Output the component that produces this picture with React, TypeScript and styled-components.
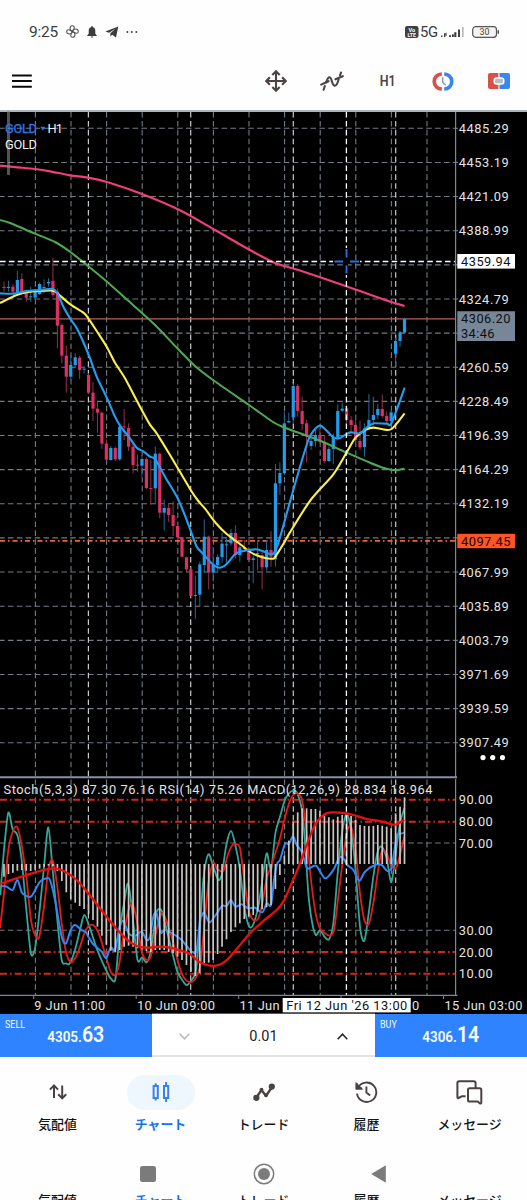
import React from 'react';
import styled, { createGlobalStyle } from 'styled-components';

const GlobalStyle = createGlobalStyle`
  * { box-sizing: border-box; }
  body { margin: 0; background: #fefefe; font-family: Roboto, "Noto Sans CJK JP", sans-serif; }
`;

const Screen = styled.main`
  width: 527px;
  height: 1200px;
  overflow: hidden;
  display: flex;
  flex-direction: column;
  background: #fefefe;
`;

const StatusBar = styled.header`
  height: 52px;
  padding: 11px 28px 0 29px;
  display: flex;
  align-items: center;
  color: #3c3c3c;
  flex: none;
`;

const StatusText = styled.span<{ $size: number }>`
  font-size: ${(p) => p.$size}px;
  line-height: 20px;
  letter-spacing: -0.2px;
`;

const StatusIcon = styled.svg<{ $gap: number }>`
  margin-left: ${(p) => p.$gap}px;
  flex: none;
  overflow: visible;
`;

const Spacer = styled.div`
  flex: 1;
`;

const Toolbar = styled.div`
  height: 58px;
  padding: 0 14px 0 12px;
  display: flex;
  align-items: center;
  flex: none;
`;

const ToolButton = styled.button`
  width: 55.6px;
  height: 40px;
  padding: 0;
  border: 0;
  background: none;
  display: flex;
  align-items: center;
  justify-content: center;
  color: #4c4444;
`;

const ToolGroup = styled.div`
  display: flex;
  margin-right: -13.4px;
`;

const Timeframe = styled.span`
  font-family: Roboto, sans-serif;
  font-size: 15px;
  font-weight: 600;
  transform: scaleX(0.83);
`;

const ChartSvg = styled.svg`
  display: block;
  flex: none;
  background: #000;
  font-family: Roboto, sans-serif;
`;

const TradeBar = styled.section`
  height: 43px;
  display: grid;
  grid-template-columns: 152px 1fr 152px;
  flex: none;
`;

const PriceButton = styled.button`
  position: relative;
  border: 0;
  padding: 0 0 1px;
  background: #3083fe;
  color: #f6faff;
  display: flex;
  justify-content: center;
  align-items: center;
  font-family: Roboto, sans-serif;
`;

const Side = styled.span`
  position: absolute;
  left: 4.5px;
  top: 3px;
  font-size: 11.5px;
  line-height: 14px;
  transform: scaleX(0.78);
  transform-origin: left;
`;

const Quote = styled.span`
  font-size: 15.5px;
  font-weight: 600;
  line-height: 28px;
  transform: scaleX(0.87);
  b { font-size: 22.5px; font-weight: 600; }
`;

const VolumeBox = styled.div`
  display: flex;
  align-items: center;
  justify-content: space-between;
  padding: 4px 27px 0;
  border-bottom: 2px solid #e4e4e4;
  background: #fff;
  color: #222;
  font-size: 14.5px;
`;

const NavBar = styled.nav`
  height: 76.7px;
  padding: 18px 6px 0;
  display: grid;
  grid-template-columns: repeat(5, 103px);
  flex: none;
`;

const NavItem = styled.div`
  display: flex;
  flex-direction: column;
  align-items: center;
`;

const Pill = styled.div<{ $active?: boolean }>`
  width: 68px;
  height: 34.5px;
  border-radius: 17.5px;
  display: flex;
  align-items: center;
  justify-content: center;
  background: ${(p) => (p.$active ? '#eef6fe' : 'transparent')};
  color: ${(p) => (p.$active ? '#3a80ec' : '#4a4242')};
`;

const NavLabel = styled.span<{ $active?: boolean }>`
  font-family: "Noto Sans CJK JP", sans-serif;
  font-size: 12.9px;
  line-height: 18px;
  white-space: nowrap;
  font-weight: ${(p) => (p.$active ? 700 : 500)};
  color: ${(p) => (p.$active ? '#1673ea' : '#151515')};
`;

const NavItemLabel = styled(NavLabel)`
  margin-top: 5px;
`;

const SystemBar = styled.div`
  height: 57.3px;
  padding-top: 24px;
  display: grid;
  grid-template-columns: repeat(3, 115.2px);
  justify-content: center;
  justify-items: center;
  align-items: center;
  flex: none;
`;

const LabelStrip = styled.div`
  display: grid;
  grid-template-columns: repeat(5, 103px);
  padding: 0 6px;
  justify-items: center;
`;

type Pt = [number, number];

const candleX = (i: number) => 4 + 4.45 * i;

/* [up, bodyTop, bodyBottom, wickTop, wickBottom], in thirds of a pixel from the block's base */
type Candle = [number, number, number, number, number];
const candleBlocks: { base: number; rows: Candle[] }[] = [
  {
    base: 260,
    rows: [
      [0, 81, 84, 65, 95], [1, 81, 84, 62, 95], [0, 80, 95, 72, 98], [1, 60, 97, 33, 100], [0, 57, 95, 40, 97],
      [0, 92, 113, 88, 125], [1, 109, 112, 80, 125], [1, 95, 113, 88, 120], [1, 72, 102, 68, 105], [1, 81, 84, 58, 100],
      [1, 66, 70, 55, 80], [0, 63, 105, -7, 110], [0, 95, 197, 85, 265], [0, 195, 287, 190, 310], [0, 287, 350, 257, 398],
      [1, 315, 350, 285, 362], [1, 292, 315, 280, 325], [0, 293, 330, 288, 357], [1, 326, 329, 318, 340], [0, 345, 398, 340, 400],
      [0, 398, 446, 366, 483], [0, 446, 458, 425, 518], [0, 458, 551, 455, 567], [0, 551, 599, 538, 602], [1, 564, 600, 558, 602],
      [0, 564, 598, 560, 603], [1, 500, 598, 495, 602], [0, 499, 502, 447, 540], [0, 504, 560, 490, 573], [0, 560, 615, 545, 640],
      [0, 614, 617, 583, 635],
    ],
  },
  {
    base: 380,
    rows: [
      [1, 237, 257, 225, 290], [0, 237, 324, 232, 328], [0, 324, 327, 240, 375], [1, 221, 325, 200, 368], [0, 221, 398, 218, 415],
      [1, 384, 398, 358, 452], [0, 384, 405, 370, 425], [0, 405, 438, 365, 468], [0, 438, 472, 425, 475], [0, 472, 530, 470, 532],
      [0, 532, 568, 530, 577], [0, 568, 648, 562, 650], [1, 645, 648, 587, 718], [1, 553, 644, 545, 678], [1, 470, 555, 418, 578],
      [0, 470, 577, 467, 628], [1, 555, 578, 500, 605], [1, 531, 555, 523, 575], [1, 491, 531, 458, 548], [1, 493, 496, 475, 550],
      [1, 459, 490, 447, 497], [0, 459, 525, 436, 535], [1, 502, 525, 493, 545], [0, 504, 507, 480, 515], [0, 512, 540, 500, 543],
      [1, 535, 540, 520, 610], [1, 519, 522, 480, 570], [0, 525, 562, 515, 628], [1, 510, 562, 480, 572], [0, 510, 530, 453, 560],
      [1, 310, 538, 252, 560], [1, 279, 310, 247, 345],
    ],
  },
  {
    base: 300,
    rows: [
      [1, 370, 520, 335, 525], [1, 363, 367, 338, 370], [1, 258, 352, 250, 370], [0, 258, 333, 252, 350], [0, 333, 372, 290, 390],
      [0, 370, 410, 360, 487], [1, 423, 438, 400, 450], [1, 405, 423, 390, 440], [0, 405, 425, 385, 430], [0, 425, 483, 405, 490],
      [1, 447, 483, 440, 485], [1, 410, 447, 400, 492], [1, 333, 412, 313, 420], [1, 326, 332, 308, 337], [0, 325, 360, 322, 370],
      [0, 360, 375, 348, 400], [0, 375, 420, 358, 428], [0, 423, 442, 362, 450], [1, 385, 441, 370, 470], [1, 360, 385, 282, 390],
      [1, 345, 360, 290, 375], [1, 327, 345, 312, 358], [0, 327, 348, 284, 355], [0, 348, 363, 335, 370], [1, 337, 363, 330, 372],
      [1, 123, 161, 113, 200], [1, 97, 123, 93, 140], [1, 57, 98, 53, 100],
    ],
  },
];

const candles = candleBlocks.flatMap(({ base, rows }) =>
  rows.map(([up, a, b, c, d]) => ({ up: up === 1, a: base + a / 3, b: base + b / 3, c: base + c / 3, d: base + d / 3 })),
);

const shift = (ox: number, oy: number, pts: Pt[]): Pt[] => pts.map(([x, y]) => [ox + x / 3, oy + y / 3]);

const slowAverage: Pt[] = [
  [0, 165.6], [18, 167.3], [35, 169], [50, 171.3], [70, 175.3], [88, 177.7], [107, 182], [142, 194], [180, 210.3],
  [215, 230], [250, 250], [275, 263], [300, 270.5], [347, 286.5], [383, 299.3], [404.5, 306],
];
const midAverage: Pt[] = [
  [0, 220], [10, 223], [35, 233.7], [55, 242], [70, 251.7], [88, 266], [107, 281.7], [133, 305], [155, 325], [178, 349],
  [195, 366], [213, 380], [249, 405], [273, 422], [285, 427.7], [320, 440.7], [346.7, 452.7], [370, 462.7], [385, 468.3],
  [395, 470.3], [404.5, 468.7],
];
const yellowAverage: Pt[] = [
  ...shift(0, 260, [[0, 129], [50, 105], [80, 97], [120, 93], [158, 92], [172, 100], [212, 134], [250, 158], [265, 175], [290, 213], [320, 260], [345, 308], [375, 355]]),
  ...shift(140, 380, [[0, 80], [30, 134], [48, 157], [90, 225], [152, 330], [175, 363], [195, 386], [230, 432], [260, 462], [300, 492], [326, 513], [350, 526], [375, 534], [395, 536], [405, 532], [433, 487], [450, 457]]),
  ...shift(270, 300, [[122, 600], [190, 523], [230, 457], [255, 415], [285, 390], [310, 383], [335, 387], [365, 387], [404, 340]]),
];
const blueAverage: Pt[] = [
  ...shift(0, 260, [[0, 100], [40, 101], [80, 93], [120, 90], [158, 87], [172, 100], [190, 140], [212, 178], [232, 208], [265, 282], [290, 350], [320, 412], [345, 470], [362, 500], [386, 530], [410, 563]]),
  ...shift(140, 380, [[10, 214], [30, 230], [46, 238], [75, 290], [113, 355], [140, 420], [153, 455], [170, 500], [190, 522], [215, 550], [232, 562], [245, 562], [260, 552], [285, 523], [300, 515], [345, 508], [365, 512], [395, 523], [408, 508], [425, 455], [450, 365]]),
  ...shift(270, 300, [[90, 500], [115, 420], [130, 393], [150, 377], [170, 392], [190, 412], [210, 414], [230, 402], [243, 397], [270, 400], [290, 383], [312, 370], [350, 371], [365, 368], [404, 263]]),
];

const stochMain: Pt[] = [
  ...shift(0, 770, [[1, 375], [12, 240], [25, 128], [38, 178], [52, 195], [65, 270], [80, 430], [93, 552], [106, 530], [119, 420], [132, 290], [145, 172], [158, 300], [172, 450], [185, 570], [198, 580], [210, 580], [225, 540], [240, 480], [253, 435], [270, 475], [290, 535], [318, 600], [332, 625], [345, 632], [352, 570], [359, 480], [372, 400], [384, 340], [395, 410], [412, 567], [426, 562], [440, 577], [452, 545], [460, 490], [470, 425], [485, 422], [500, 480], [520, 560], [532, 605], [548, 632], [560, 645], [575, 630], [588, 600]]),
  ...shift(200, 770, [[0, 470], [10, 330], [25, 253], [40, 290], [55, 330], [66, 310], [79, 225], [93, 183], [106, 225], [120, 300], [133, 410], [146, 467], [158, 467], [175, 410], [187, 330], [200, 250], [213, 300], [226, 190], [240, 140], [253, 95], [265, 72], [280, 62], [292, 70], [306, 120], [316, 230], [325, 370], [335, 450], [347, 495], [360, 480], [372, 498], [387, 508], [400, 460], [413, 310], [426, 190], [440, 130], [453, 180], [465, 280], [480, 470], [493, 512], [506, 430], [520, 320], [533, 245], [545, 230], [560, 265], [574, 337], [587, 250], [600, 160], [613, 115]]),
];
const stochSignal: Pt[] = [
  ...shift(0, 770, [[0, 475], [12, 370], [25, 240], [40, 180], [52, 172], [65, 225], [80, 330], [93, 450], [106, 497], [118, 500], [132, 410], [145, 300], [158, 270], [172, 350], [185, 460], [198, 545], [213, 577], [228, 560], [240, 530], [255, 485], [270, 465], [285, 470], [300, 500], [318, 560], [332, 605], [345, 615], [358, 580], [370, 500], [384, 425], [397, 400], [412, 460], [425, 545], [440, 570], [452, 560], [465, 500], [480, 440], [490, 430], [505, 470], [520, 520], [535, 580], [550, 620], [570, 637], [585, 628]]),
  ...shift(200, 770, [[0, 590], [10, 500], [25, 340], [40, 280], [52, 298], [70, 303], [82, 260], [95, 228], [108, 222], [120, 235], [133, 330], [146, 420], [160, 450], [175, 445], [187, 400], [200, 325], [213, 290], [226, 250], [240, 205], [253, 150], [267, 100], [280, 75], [292, 70], [306, 90], [320, 190], [333, 330], [347, 430], [360, 475], [375, 490], [390, 497], [402, 480], [415, 380], [426, 290], [440, 190], [453, 170], [468, 250], [480, 370], [493, 450], [506, 462], [520, 400], [533, 310], [545, 245], [560, 250], [575, 290], [590, 290], [613, 200]]),
];
const rsi: Pt[] = [
  ...shift(0, 770, [[3, 348], [20, 350], [38, 360], [52, 330], [66, 368], [80, 378], [95, 378], [120, 335], [140, 325], [150, 330], [165, 390], [185, 500], [198, 520], [212, 480], [225, 465], [245, 480], [258, 487], [265, 500], [279, 522], [305, 545], [318, 565], [332, 533], [345, 540], [359, 470], [370, 453], [386, 490], [405, 498], [425, 485], [440, 510], [450, 500], [460, 440], [470, 430], [482, 487], [495, 480], [520, 492], [545, 510], [575, 545], [590, 540]]),
  ...shift(200, 770, [[0, 450], [5, 438], [13, 428], [28, 457], [45, 438], [66, 408], [80, 408], [93, 390], [106, 410], [125, 403], [145, 415], [165, 413], [187, 427], [200, 400], [213, 405], [222, 330], [232, 280], [240, 270], [255, 222], [267, 222], [279, 198], [290, 225], [305, 245], [322, 295], [348, 287], [375, 325], [400, 300], [418, 263], [430, 265], [442, 285], [460, 300], [478, 332], [495, 305], [525, 285], [545, 285], [562, 303], [575, 290], [590, 200], [600, 192], [613, 188]]),
];
const macdSignal: Pt[] = [
  ...shift(0, 770, [[0, 342], [40, 328], [80, 315], [120, 303], [158, 295], [190, 302], [230, 330], [265, 370], [300, 415], [340, 465], [380, 508], [410, 528], [440, 533], [480, 530], [510, 533], [540, 541], [570, 552]]),
  ...shift(200, 770, [[0, 577], [40, 588], [75, 575], [110, 537], [150, 490], [190, 453], [230, 420], [250, 395], [275, 340], [300, 280], [320, 225], [345, 165], [375, 132], [400, 127], [430, 129], [460, 135], [500, 147], [540, 153], [575, 163], [590, 163], [613, 150]]),
];

/* MACD histogram ends, in thirds of a pixel below y = 770; the zero line is 282 */
const histogram = [
  320, 312, 308, 302, 300, 302, 303, 300, 296, 290, 287, 288, 303, 333, 367, 388, 398, 408, 417, 432, 450, 470, 497, 524, 542,
  547, 540, 530, 527, 530, 535, 538, 543, 546, 540, 540, 540, 546, 550, 560, 570, 585, 605, 618, 610, 580, 578, 570, 552, 530,
  508, 486, 472, 460, 447, 440, 435, 425, 418, 412, 405, 357, 315, 257, 212, 155, 127, 115, 115, 117, 117, 122, 133, 142, 148,
  140, 135, 135, 138, 150, 165, 168, 168, 168, 165, 167, 170, 175, 130, 110, 82,
];

/* Catmull-Rom spline through the points */
const smooth = (p: Pt[]) => {
  let d = `M${p[0][0]} ${p[0][1]}`;
  for (let i = 0; i < p.length - 1; i++) {
    const a = p[Math.max(0, i - 1)];
    const b = p[i];
    const c = p[i + 1];
    const e = p[Math.min(p.length - 1, i + 2)];
    const k = 7;
    d += `C${(b[0] + (c[0] - a[0]) / k).toFixed(2)} ${(b[1] + (c[1] - a[1]) / k).toFixed(2)} ${(c[0] - (e[0] - b[0]) / k).toFixed(2)} ${(c[1] - (e[1] - b[1]) / k).toFixed(2)} ${c[0].toFixed(2)} ${c[1].toFixed(2)}`;
  }
  return d;
};

const gridX = Array.from({ length: 12 }, (_, i) => 35.4 + i * 35.6);
const dayX = [88.4, 190.7, 293.3, 395.7];
const prices = Array.from({ length: 19 }, (_, i) => ({ y: 128.3 + i * 34.135, text: (4485.29 - i * 32.1).toFixed(2) }));
/* rows whose label gives way to a price tag */
const taggedRows = [4, 6, 12];
const levels = [
  { y: 799.7, text: '90.00', hot: true },
  { y: 821.7, text: '80.00', hot: true },
  { y: 843, text: '70.00', hot: false },
  { y: 930.3, text: '30.00', hot: false },
  { y: 952, text: '20.00', hot: true },
  { y: 973.8, text: '10.00', hot: true },
];
const times: [number, number, string][] = [
  [34.3, 71, '9 Jun 11:00'],
  [137, 78, '10 Jun 09:00'],
  [239.5, 40, '11 Jun'],
  [412, 8, '0'],
  [444.5, 78, '15 Jun 03:00'],
];

const PriceTag = ({ y, h, fill, color, children }: { y: number; h: number; fill: string; color: string; children: string }) => (
  <g>
    <rect x={457.3} y={y} width={57.7} height={h} fill={fill} />
    <text x={461} y={y + 11.8} fill={color} textLength={49.5}>{children}</text>
  </g>
);

const Chart = () => (
  <ChartSvg width={527} height={904} viewBox="0 110 527 904" fontSize={12.8}>
    <g stroke="#737b84" strokeWidth={1.1} strokeDasharray="5.6 3.3">
      {gridX.map((x) => <line key={x} x1={x} x2={x} y1={112} y2={995} />)}
      {prices.map((p) => <line key={p.y} x1={-1} x2={455} y1={p.y} y2={p.y} />)}
      {levels.filter((l) => !l.hot).map((l) => <line key={l.y} x1={-1} x2={455} y1={l.y} y2={l.y} />)}
    </g>
    <g stroke="#c9c9c9" strokeWidth={1.2} strokeDasharray="5.6 3.3">
      {dayX.map((x) => <line key={x} x1={x} x2={x} y1={112} y2={995} />)}
    </g>
    <g stroke="#d0291c" strokeWidth={2} strokeDasharray="7 3 1.6 3">
      {levels.filter((l) => l.hot).map((l) => <line key={l.y} x1={0} x2={455} y1={l.y} y2={l.y} />)}
    </g>
    <line x1={0} x2={455} y1={318.8} y2={318.8} stroke="#b5605f" strokeWidth={1.3} />
    <line x1={0} x2={455} y1={540.8} y2={540.8} stroke="#f4602d" strokeWidth={1.8} strokeDasharray="5 3 1.5 3" />

    {candles.map((c, i) => (
      <g key={i}>
        <line x1={candleX(i)} x2={candleX(i)} y1={c.c} y2={c.d} stroke={c.up ? '#28649b' : '#96304c'} strokeWidth={1} />
        <rect x={candleX(i) - 1.6} y={c.a} width={3.2} height={c.b - c.a} fill={c.up ? '#229be9' : '#dc2f63'} />
      </g>
    ))}

    <g fill="none" strokeLinejoin="round">
      <path d={smooth(slowAverage)} stroke="#ee3f7d" strokeWidth={2.2} />
      <path d={smooth(midAverage)} stroke="#4fa954" strokeWidth={2} />
      <path d={smooth(yellowAverage)} stroke="#fbee4f" strokeWidth={2.1} />
      <path d={smooth(blueAverage)} stroke="#229ef0" strokeWidth={2.1} />
      <path d={smooth(stochMain)} stroke="#35a596" strokeWidth={1.8} />
      <path d={smooth(stochSignal)} stroke="#e61b19" strokeWidth={1.8} />
      <path d={smooth(rsi)} stroke="#3187f3" strokeWidth={2} />
    </g>
    {histogram.map((v, i) => (
      <line key={i} x1={candleX(i)} x2={candleX(i)} y1={864} y2={770 + v / 3} stroke="#cbc8c4" strokeWidth={1.7} />
    ))}
    <path d={smooth(macdSignal)} fill="none" stroke="#ea0f0f" strokeWidth={2.3} />

    <g stroke="#fff" strokeWidth={1.3} strokeDasharray="5.6 3.3">
      <line x1={0} x2={455} y1={261.5} y2={261.5} />
      <line x1={346.4} x2={346.4} y1={112} y2={995} />
    </g>
    <rect x={333} y={260} width={27} height={3} />
    <rect x={345} y={248} width={3} height={27} />
    <path d="M334.5 261.5h8.5M350 261.5h9M346.5 249v8.5M346.5 265.5v8" stroke="#2a70e4" strokeWidth={1.8} />

    <path d="M0 111H527" stroke="#aab6ba" strokeWidth={2} />
    <path d="M455.6 112V777M455.6 779V995.3M0 995.3H457.5" stroke="#7c8797" strokeWidth={1.2} fill="none" />
    <path d="M0 777.3H457" stroke="#8791a3" strokeWidth={2} />
    <path d="M33.7 995v4M136.2 995v4M238.7 995v4M341 995v4M443.5 995v4" stroke="#7c8797" strokeWidth={1} />
    <rect x={7} y={111} width={3} height={64} fill="#8a8a8a" opacity={0.6} />

    <g fill="#e4e4e4">
      {prices.map((p, i) => (
        <g key={p.y}>
          <line x1={455} x2={458} y1={p.y} y2={p.y} stroke="#7c8797" />
          {!taggedRows.includes(i) && <text x={458.8} y={p.y + 4.6} textLength={50}>{p.text}</text>}
        </g>
      ))}
      {levels.map((l) => <text key={l.y} x={458.8} y={l.y + 4.6} textLength={34}>{l.text}</text>)}
      {times.map(([x, w, t]) => <text key={t} x={x} y={1009.6} textLength={w}>{t}</text>)}
      <text x={3.5} y={794.2} textLength={429}>Stoch(5,3,3) 87.30 76.16 RSI(14) 75.26 MACD(12,26,9) 28.834 18.964</text>
      <text x={5} y={148.8} textLength={32} fill="#f2f2f2">GOLD</text>
      <text x={47.5} y={132.7} textLength={15.5} fill="#f2f2f2">H1</text>
      <text x={5} y={132.7} textLength={32} fill="#2a78f0" stroke="#2a78f0" strokeWidth={0.3}>GOLD</text>
      <path d="M40.3 126.8h5l-2.5 3.6z" fill="#2a78f0" />
    </g>

    <PriceTag y={254} h={14.6} fill="#fff" color="#111">4359.94</PriceTag>
    <rect x={457.3} y={326} width={57.7} height={15} fill="#788797" />
    <PriceTag y={311.6} h={15.4} fill="#788797" color="#0c0f12">4306.20</PriceTag>
    <line x1={457.3} x2={515} y1={311.6} y2={311.6} stroke="#98505a" />
    <text x={461} y={338.2} fill="#0c0f12" textLength={33.5}>34:46</text>
    <PriceTag y={533.8} h={14.4} fill="#fb5426" color="#180500">4097.45</PriceTag>
    <rect x={282.7} y={998} width={128} height={14.4} fill="#fff" />
    <text x={286.3} y={1009.6} fill="#111" textLength={121}>Fri 12 Jun '26 13:00</text>

    <g fill="#fff">
      <circle cx={483} cy={757.6} r={2.6} />
      <circle cx={492.7} cy={757.6} r={2.6} />
      <circle cx={502.5} cy={757.6} r={2.6} />
    </g>
    <path d="M152 1013.5H375" stroke="#555" strokeWidth={1} />
  </ChartSvg>
);

const navItems = [
  {
    label: '気配値',
    icon: (
      <svg width="20" height="18" viewBox="0 0 20 18" fill="none" stroke="currentColor" strokeWidth="2">
        <path d="M6 15V2.6M2 6.6 6 2.4l4 4.2M14.2 2.5v12.8M10.2 11.2l4 4.2 4-4.2" />
      </svg>
    ),
  },
  {
    label: 'チャート',
    active: true,
    icon: (
      <svg width="20" height="22" viewBox="0 0 20 22" fill="none" stroke="currentColor" strokeWidth="2">
        <path d="M2.6 5h4.2v12H2.6zM4.7 2.2V5M4.7 17v2.4M13 5h4.2v12H13zM15.1 1v4M15.1 17v4" />
      </svg>
    ),
  },
  {
    label: 'トレード',
    icon: (
      <svg width="22" height="20" viewBox="0 0 22 20" fill="none" stroke="currentColor" strokeWidth="2.3" strokeLinejoin="round">
        <path d="M3.4 15.5 8.5 8l4.5 6 6-9" />
        <g fill="currentColor" stroke="none">
          <circle cx="3.4" cy="15.8" r="3.1" />
          <circle cx="18.8" cy="4.6" r="3.1" />
          <circle cx="8.5" cy="7.6" r="1.9" />
          <circle cx="13" cy="13.2" r="1.9" />
        </g>
      </svg>
    ),
  },
  {
    label: '履歴',
    icon: (
      <svg width="23" height="22" viewBox="0 0 23 22" fill="none" stroke="currentColor" strokeWidth="1.9">
        <path d="M3.2 6.4A9.7 9.7 0 1 1 2 12.6M1.6 2.2v5.3h5.2M11.4 5.6v6l3.8 3" />
        <path d="M1.6 3v4.5h4.5z" fill="currentColor" />
      </svg>
    ),
  },
  {
    label: 'メッセージ',
    icon: (
      <svg width="27" height="25" viewBox="0 0 27 25" fill="none" stroke="currentColor" strokeWidth="2" strokeLinejoin="round">
        <path d="M9.6 16.2H6.2L2.6 18c-1 .4-1.2-.2-1.2-1V3c0-1.2.7-1.8 1.8-1.8h14.6c1.1 0 1.8.7 1.8 1.8v5" />
        <path d="M13.8 8.2h9.8c1 0 1.7.7 1.7 1.7v12.5c0 1-.6 1.5-1.4 1l-2.1-1.8h-8c-1.1 0-1.8-.7-1.8-1.7V10c0-1.1.7-1.8 1.8-1.8z" />
      </svg>
    ),
  },
];

const App = () => (
  <Screen>
    <GlobalStyle />
    <StatusBar>
      <StatusText $size={15.5}>9:25</StatusText>
      <StatusIcon $gap={8} width="13" height="13" viewBox="0 0 13 13" fill="none" stroke="#555" strokeWidth="1.1">
        {[0, 90, 180, 270].map((r) => (
          <path key={r} transform={`rotate(${r} 6.5 6.5)`} d="M6.5 6.5C3.2 5.8 3.3.7 6.5.7 8.8.7 8.9 3 6.5 6.5" />
        ))}
      </StatusIcon>
      <StatusIcon $gap={7.5} width="10" height="12" viewBox="0 0 10 12" fill="#3c3c3c">
        <path d="M5 .3c.7 0 1 .4 1 1C7.6 1.8 8.3 3 8.3 5v2.7L9.7 9.3v.7H.3v-.7l1.4-1.6V5C1.7 3 2.4 1.8 4 1.3c0-.6.3-1 1-1zM3.8 10.5h2.4c0 1.5-2.4 1.5-2.4 0z" />
      </StatusIcon>
      <StatusIcon $gap={8.5} width="13.5" height="12" viewBox="0 0 13.5 12" fill="#3c3c3c">
        <path d="M13.3.4 11 11.5 7.2 8.7 5.5 10.4 5.3 7.3 10.5 2.8 4 6.7.3 5.5z" />
      </StatusIcon>
      <StatusIcon $gap={7.5} width="12" height="4" viewBox="0 0 12 4" fill="#444">
        <circle cx="1.4" cy="2" r="1" /><circle cx="5.8" cy="2" r="1" /><circle cx="10.3" cy="2" r="1" />
      </StatusIcon>
      <Spacer />
      <StatusIcon $gap={0} width="13.5" height="12" viewBox="0 0 13.5 12">
        <rect width="13.5" height="12" rx="2.2" fill="#3f3f3f" />
        <text x="6.75" y="5.6" fontSize="5.6" fontWeight="700" fill="#fff" textAnchor="middle">Vo</text>
        <text x="6.75" y="10.8" fontSize="5.2" fontWeight="700" fill="#fff" textAnchor="middle">LTE</text>
      </StatusIcon>
      <StatusText $size={14.8}>&#8202;5G</StatusText>
      <StatusIcon $gap={3} width="23.5" height="12" viewBox="0 0 23.5 12" fill="#3f3f3f">
        <path d="M0 9.5h1.4V11H0zM3 7.3h1.4V11H3zM4.6 6.7h1v3h-1zM8 9.3h2V11H8zM11 8.3h1.8V11H11zM13.2 6.3h2.2V11h-2.2zM17 3.5h2V11h-2z" />
        <path d="M21 1h1.7v10H21z" fill="#bbb" />
      </StatusIcon>
      <StatusIcon $gap={7} width="27.5" height="12" viewBox="0 0 27.5 12">
        <rect x=".7" y=".7" width="23.8" height="10.6" rx="3" fill="#f3f3f3" stroke="#555" strokeWidth="1.2" />
        <rect x="25.5" y="4" width="1.5" height="4" rx=".7" fill="#555" />
        <text x="12.4" y="9.2" fontSize="8.8" fill="#444" textAnchor="middle">30</text>
      </StatusIcon>
    </StatusBar>

    <Toolbar>
      <svg width="20" height="14" viewBox="0 0 20 14">
        <path d="M0 1.5h19.8M0 7.1h19.8M0 12.7h19.8" stroke="#0a0a0a" strokeWidth="2" />
      </svg>
      <Spacer />
      <ToolGroup>
        <ToolButton aria-label="Crosshair">
          <svg width="22" height="22" viewBox="0 0 22 22" fill="none" stroke="currentColor" strokeWidth="2.1">
            <path d="M11 1.5v19M1.5 11h19M7.3 4.9 11 1.3l3.7 3.6M7.3 17.1 11 20.7l3.7-3.6M4.900 7.3 1.3 11l3.6 3.7M17.1 7.3l3.6 3.7-3.6 3.7" />
          </svg>
        </ToolButton>
        <ToolButton aria-label="Indicators">
          <svg width="24" height="20" viewBox="0 0 24 20" fill="none" stroke="currentColor" strokeWidth="2.1" strokeLinecap="round">
            <path d="M3.6 18.8 4.8 15M6 11.5C7.2 8.5 8 6.3 9.4 6.3c3 0 2 8.500 5.6 8.500 1.9 0 2.7-3 3.6-6.3M20 4.500l1-3" />
            <path d="M1.2 13.6 8.6 10.2M15.5 8.3 22.8 5.2" />
          </svg>
        </ToolButton>
        <ToolButton><Timeframe>H1</Timeframe></ToolButton>
        <ToolButton aria-label="Sync time">
          <svg width="22" height="19" viewBox="0 0 22 19" fill="none">
            <path d="M9.8 2C5.5 2 2.2 5.2 2.2 9.5S5.5 17 9.8 17" stroke="#d8504a" strokeWidth="3.6" />
            <path d="M12.2 2c4.3 0 7.6 3.2 7.6 7.5S16.5 17 12.2 17" stroke="#3a86ee" strokeWidth="3.6" />
            <path d="M10.7 5.2v5l3 3" stroke="#8ba0ae" strokeWidth="1.6" />
          </svg>
        </ToolButton>
        <ToolButton aria-label="Link">
          <svg width="22" height="16" viewBox="0 0 22 16">
            <path d="M10.4 0H2Q0 0 0 2v12q0 2 2 2h8.4z" fill="#d8504a" />
            <path d="M11.5 0H20q2 0 2 2v12q0 2-2 2h-8.5z" fill="#3a86ee" />
            <rect x="5.5" y="4.3" width="11" height="7.4" rx="3.2" fill="#fff" />
            <rect x="7" y="5.8" width="8" height="4.4" rx="1.5" fill="#b4bcc4" />
          </svg>
        </ToolButton>
      </ToolGroup>
    </Toolbar>

    <Chart />

    <TradeBar>
      <PriceButton>
        <Side>SELL</Side>
        <Quote>4305.<b>63</b></Quote>
      </PriceButton>
      <VolumeBox>
        <svg width="11" height="7" viewBox="0 0 11 7" fill="none" stroke="#b9b9b9" strokeWidth="1.5"><path d="m.7.8 4.8 5 4.8-5" /></svg>
        <span>0.01</span>
        <svg width="11" height="7" viewBox="0 0 11 7" fill="none" stroke="#222" strokeWidth="1.5"><path d="m.7 6.2 4.8-5 4.8 5" /></svg>
      </VolumeBox>
      <PriceButton>
        <Side>BUY</Side>
        <Quote>4306.<b>14</b></Quote>
      </PriceButton>
    </TradeBar>

    <NavBar>
      {navItems.map((n) => (
        <NavItem key={n.label}>
          <Pill $active={n.active}>{n.icon}</Pill>
          <NavItemLabel $active={n.active}>{n.label}</NavItemLabel>
        </NavItem>
      ))}
    </NavBar>

    <SystemBar>
      <svg width="16" height="16"><rect width="16" height="16" rx="2.5" fill="#7b7b7b" /></svg>
      <svg width="22" height="22" viewBox="0 0 22 22">
        <circle cx="11" cy="11" r="9.7" fill="none" stroke="#7b7b7b" strokeWidth="1.5" />
        <circle cx="11" cy="11" r="6" fill="#7b7b7b" />
      </svg>
      <svg width="15" height="18" viewBox="0 0 15 18"><path d="M14.8.2v17.6L.2 9z" fill="#7b7b7b" /></svg>
    </SystemBar>

    <LabelStrip>
      {navItems.map((n) => <NavLabel key={n.label} $active={n.active}>{n.label}</NavLabel>)}
    </LabelStrip>
  </Screen>
);

export default App;
